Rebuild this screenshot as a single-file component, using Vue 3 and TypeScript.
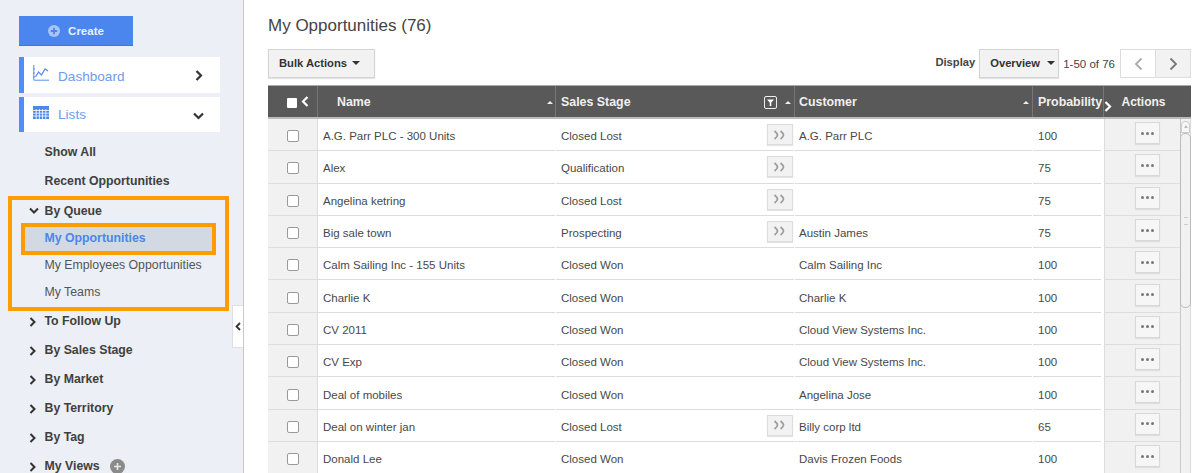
<script setup lang="ts">
interface Row { name: string; stage: string; customer: string; prob: string; arrow: boolean }
const rows: Row[] = [
  { name: 'A.G. Parr PLC - 300 Units', stage: 'Closed Lost', customer: 'A.G. Parr PLC', prob: '100', arrow: true },
  { name: 'Alex', stage: 'Qualification', customer: '', prob: '75', arrow: true },
  { name: 'Angelina ketring', stage: 'Closed Lost', customer: '', prob: '75', arrow: true },
  { name: 'Big sale town', stage: 'Prospecting', customer: 'Austin James', prob: '75', arrow: true },
  { name: 'Calm Sailing Inc - 155 Units', stage: 'Closed Won', customer: 'Calm Sailing Inc', prob: '100', arrow: false },
  { name: 'Charlie K', stage: 'Closed Won', customer: 'Charlie K', prob: '100', arrow: false },
  { name: 'CV 2011', stage: 'Closed Won', customer: 'Cloud View Systems Inc.', prob: '100', arrow: false },
  { name: 'CV Exp', stage: 'Closed Won', customer: 'Cloud View Systems Inc.', prob: '100', arrow: false },
  { name: 'Deal of mobiles', stage: 'Closed Won', customer: 'Angelina Jose', prob: '100', arrow: false },
  { name: 'Deal on winter jan', stage: 'Closed Lost', customer: 'Billy corp ltd', prob: '65', arrow: true },
  { name: 'Donald Lee', stage: 'Closed Won', customer: 'Davis Frozen Foods', prob: '100', arrow: false },
]
const closedGroups = ['To Follow Up', 'By Sales Stage', 'By Market', 'By Territory', 'By Tag']
</script>

<template>
  <div class="page">
    <aside class="sidebar">
      <button class="create">
        <svg width="12" height="12" viewBox="0 0 12 12"><circle cx="6" cy="6" r="6" fill="#a9c4f5" /><path d="M6 2.8v6.4M2.8 6h6.4" stroke="#4a86ee" stroke-width="1.8" /></svg>
        <span>Create</span>
      </button>
      <div class="nav-card first">
        <svg class="nav-ico" width="16" height="16" viewBox="0 0 16 16" fill="none" stroke="#5b8def" stroke-width="1"><path d="M.8 0v15.2H16" /><path d="M2.5 12l3-5 3 3 3.5-6 3 2" stroke-width="1.3" /><path d="M0 4h2M0 8h2M0 12h2" /></svg>
        <span class="nav-label">Dashboard</span>
        <svg class="chev-r" width="8" height="11" viewBox="0 0 8 11"><path d="M1.5 1l4.5 4.5L1.5 10" fill="none" stroke="#333" stroke-width="2.2" /></svg>
      </div>
      <div class="nav-card second">
        <svg class="nav-ico" width="16" height="13" viewBox="0 0 16 13"><rect width="16" height="13" fill="#4f86ec" /><path d="M0 4.5h16M0 7.2h16M0 10h16M3.2 3v10M6.4 3v10M9.6 3v10M12.8 3v10" stroke="#fff" stroke-width=".8" /></svg>
        <span class="nav-label">Lists</span>
        <svg class="chev-d" width="11" height="8" viewBox="0 0 11 8"><path d="M1 1.5l4.500 4.500L10 1.500" fill="none" stroke="#333" stroke-width="2.2" /></svg>
      </div>
      <div class="item bold show-all">Show All</div>
      <div class="item bold recent">Recent Opportunities</div>
      <div class="queue-box">
        <div class="item bold group">
          <svg class="g-ico" width="10" height="8" viewBox="0 0 10 8"><path d="M1 1.500l4 4 4-4" fill="none" stroke="#333" stroke-width="2" /></svg>
          By Queue
        </div>
        <div class="active-box"><span>My Opportunities</span></div>
        <div class="item sub">My Employees Opportunities</div>
        <div class="item sub">My Teams</div>
      </div>
      <div class="closed-list">
        <div v-for="g in closedGroups" :key="g" class="item bold group">
          <svg class="g-ico" width="8" height="10" viewBox="0 0 8 10"><path d="M1.500 1l4 4-4 4" fill="none" stroke="#333" stroke-width="2" /></svg>
          {{ g }}
        </div>
        <div class="item bold group">
          <svg class="g-ico" width="8" height="10" viewBox="0 0 8 10"><path d="M1.500 1l4 4-4 4" fill="none" stroke="#333" stroke-width="2" /></svg>
          My Views
          <svg class="plus" width="15" height="15" viewBox="0 0 15 15"><circle cx="7.500" cy="7.500" r="7.500" fill="#8a8a8a" /><path d="M7.500 4v7M4 7.500h7" stroke="#e8e8e8" stroke-width="1.600" /></svg>
        </div>
      </div>
      <div class="collapse">
        <svg width="6" height="9" viewBox="0 0 6 9"><path d="M5 1L1.500 4.500 5 8" fill="none" stroke="#333" stroke-width="1.800" /></svg>
      </div>
    </aside>

    <main class="main">
      <h1 class="title">My Opportunities (76)</h1>
      <div class="toolbar">
        <button class="btn bulk">Bulk Actions <i class="caret"></i></button>
        <div class="tools-right">
          <span class="display">Display</span>
          <button class="btn overview">Overview <i class="caret"></i></button>
          <span class="count">1-50 of 76</span>
          <div class="pager">
            <span class="pg white"><svg width="9" height="14" viewBox="0 0 9 14"><path d="M7.500 1.500L2 7l5.500 5.500" fill="none" stroke="#aaa" stroke-width="1.800" /></svg></span>
            <span class="pg"><svg width="9" height="14" viewBox="0 0 9 14"><path d="M1.500 1.500L7 7l-5.500 5.500" fill="none" stroke="#777" stroke-width="1.800" /></svg></span>
          </div>
        </div>
      </div>

      <div class="table">
        <div class="head grid">
          <div class="hc hc-check"><i class="hbox"></i><svg width="8" height="11" viewBox="0 0 8 11"><path d="M6.500 1L2 5.500l4.500 4.500" fill="none" stroke="#fff" stroke-width="2.200" /></svg></div>
          <div class="hc name-h">Name<i class="up"></i></div>
          <div class="hc">Sales Stage
            <svg class="filter" width="13" height="13" viewBox="0 0 13 13"><rect x=".5" y=".5" width="12" height="12" rx="1.500" fill="none" stroke="#eee" /><path d="M3 3.500h7L7.300 6.500V10H5.700V6.500z" fill="#fff" /></svg>
            <i class="up"></i></div>
          <div class="hc cust-h">Customer<i class="up"></i></div>
          <div class="hc">Probability<svg class="prob-chev" width="8" height="11" viewBox="0 0 8 11"><path d="M1.500 1L6 5.500 1.500 10" fill="none" stroke="#fff" stroke-width="2.200" /></svg></div>
          <div class="hc act-h">Actions</div>
        </div>
        <div class="body">
          <div v-for="r in rows" :key="r.name" class="grid row">
            <div class="c c-check"><i class="cbox"></i></div>
            <div class="c">{{ r.name }}</div>
            <div class="c stage">{{ r.stage }}
              <span v-if="r.arrow" class="more">
                <svg width="14" height="10" viewBox="0 0 14 10"><path d="M1.500 1C4 3 4.500 4 4.500 5S4 7 1.500 9M7.500 1C10 3 10.500 4 10.500 5S10 7 7.500 9" fill="none" stroke="#a0a0a0" stroke-width="1.800" /></svg>
              </span>
            </div>
            <div class="c cust">{{ r.customer }}</div>
            <div class="c prob">{{ r.prob }}</div>
            <div class="c c-act"><span class="dots"><i></i><i></i><i></i></span></div>
          </div>
          <div class="scroll">
            <span class="sc-up"><i></i></span>
            <span class="sc-thumb"><i></i></span>
          </div>
        </div>
      </div>
    </main>
  </div>
</template>

<style>
html, body { margin: 0; background: #fff; overflow: hidden; }
</style>

<style scoped>
.page { display: flex; width: 1200px; height: 473px; overflow: hidden; font-family: "Liberation Sans", Arial, sans-serif; }
.sidebar { position: relative; box-sizing: border-box; width: 244px; height: 473px; flex: none; background: #eceff5; border-right: 1px solid #c6c8cc; padding: 16px 0 0 19px; }
.create { display: flex; align-items: center; justify-content: center; gap: 8px; width: 114px; height: 30px; margin: 0; padding: 0; border: 0; border-bottom: 1px solid #3a78e0; background: #4a86ee; color: #e8f0fe; font: bold 11.500px "Liberation Sans", sans-serif; }
.nav-card { display: flex; align-items: center; box-sizing: border-box; width: 201px; background: #fff; border-left: 5px solid #4f8ef7; }
.first { height: 36px; margin-top: 11px; }
.second { height: 35px; margin-top: 4px; }
.nav-ico { margin-left: 9px; margin-top: -5px; flex: none; }
.nav-label { margin-left: 9px; font-size: 13.600px; color: #6d9bef; }
.first .nav-label { margin-top: 2px; }
.chev-r { margin-left: auto; margin-right: 17px; }
.chev-d { margin-left: auto; margin-right: 16px; margin-top: 3px; }
.item { position: relative; font-size: 12.300px; line-height: 29px; height: 29px; padding-left: 25.500px; white-space: nowrap; }
.bold { font-weight: bold; color: #404040; }
.show-all { margin-top: 6px; }
.recent { margin-bottom: -.5px; }
.queue-box { box-sizing: border-box; width: 221px; height: 115px; margin: 0 0 0 -11px; border: 4px solid #ff9c00; }
.queue-box .item { padding-left: 32.500px; }
.queue-box .group { line-height: 23px; height: 23px; }
.queue-box .sub { height: 27.500px; line-height: 27.500px; color: #555; font-weight: normal; }
.active-box { box-sizing: border-box; width: 195px; height: 32px; margin: 0 0 -3px 9px; background: #d3d9e2; border: 4px solid #ff9c00; display: flex; align-items: center; padding: 0 0 2px 19.500px; font: bold 12.300px "Liberation Sans", sans-serif; color: #4a86ee; }
.g-ico { position: absolute; left: 9.500px; top: 50%; transform: translateY(-50%); }
.queue-box .g-ico { left: 16.500px; }
.closed-list { margin-top: -3.500px; }
.plus { position: absolute; left: 91px; top: 7px; }
.collapse { position: absolute; left: 232px; top: 305px; box-sizing: border-box; width: 11px; height: 43px; background: #fff; border: 1px solid #dcdfe4; border-right: 0; display: flex; align-items: center; justify-content: center; }

.main { flex: 1; min-width: 0; padding: 0 9px 0 24px; }
.title { margin: 14px 0 0; font-size: 17px; line-height: 24px; font-weight: normal; color: #444; }
.toolbar { display: flex; align-items: center; justify-content: space-between; margin-top: 11px; height: 29px; }
.btn { box-sizing: border-box; display: inline-flex; align-items: center; height: 29px; padding: 0 0 2px; border: 1px solid #d4d4d4; background: #f2f2f2; color: #333; font: bold 11.200px "Liberation Sans", sans-serif; box-shadow: 0 1px 1px #e4e4e4; }
.bulk { width: 107px; padding-left: 10px; gap: 4px; }
.caret { display: inline-block; width: 0; height: 0; border-left: 4px solid transparent; border-right: 4px solid transparent; border-top: 4px solid #333; margin-left: 1px; }
.tools-right { display: flex; align-items: center; }
.display { font-size: 11.200px; font-weight: bold; color: #444; margin-right: 4px; margin-top: -3px; }
.overview { width: 80px; padding-left: 10px; gap: 6px; }
.count { font-size: 11.500px; color: #444; margin-left: 4px; margin-right: 5px; }
.pager { display: flex; height: 29px; box-sizing: border-box; border: 1px solid #ddd; }
.pg { width: 34px; display: flex; align-items: center; justify-content: center; background: #f2f2f2; }
.pg.white { background: #fff; border-right: 1px solid #ddd; }

.table { margin-top: 7px; width: 923px; }
.grid { display: grid; grid-template-columns: 50px 238px 239px 238px 71px 87px; }
.head { height: 34px; background: #595959; border-top: 1px solid #aaa; border-bottom: 2px solid #bbb; box-sizing: border-box; }
.hc { position: relative; display: flex; align-items: center; padding-left: 5px; font-size: 12.400px; font-weight: bold; color: #f0f0f0; border-right: 1px solid #777; white-space: nowrap; }
.hc:last-child { border-right: 0; }
.hc-check { padding-left: 19px; gap: 4px; }
.hbox { width: 10px; height: 10px; background: #fff; border-radius: 1px; margin-top: 2px; }
.name-h { padding-left: 19px; }
.name-h .up { right: 2px; }
.cust-h { padding-left: 4px; }
.up { position: absolute; right: 3px; top: 15px; width: 0; height: 0; border-left: 3px solid transparent; border-right: 3px solid transparent; border-bottom: 3px solid #eee; }
.filter { position: absolute; right: 17px; top: 10px; }
.prob-chev { position: absolute; right: -9px; top: 15px; z-index: 2; }
.act-h { justify-content: center; padding: 0 8px 0 0; font-size: 12px; }
.body { position: relative; height: 354px; overflow: hidden; }
.row { height: 32.300px; }
.c { position: relative; box-sizing: border-box; display: flex; align-items: center; padding: 3px 5px 0; font-size: 11.500px; color: #484848; white-space: nowrap; border-bottom: 1px solid #dcdcdc; margin-right: 1px; }
.cust { padding-left: 4px; }
.prob { margin-right: 3px; }
.c-check { background: #f1f1f1; justify-content: center; padding: 0; margin: 0; border-right: 1px solid #ddd; }
.c-act { background: #f1f1f1; margin: 0; justify-content: center; padding: 0 1px 3px 0; border-left: 1px solid #ddd; border-bottom-color: #ddd; }
.cbox { box-sizing: border-box; width: 12px; height: 12px; background: #fff; border: 1px solid #999; border-radius: 2px; margin-top: 3px; margin-left: 1px; }
.more { position: absolute; right: 1px; top: 5px; width: 26px; height: 21px; box-sizing: border-box; border: 1px solid #ddd; background: #f2f2f2; display: flex; align-items: center; justify-content: center; box-shadow: 0 1px 1px #e4e4e4; }
.dots { box-sizing: border-box; display: flex; align-items: center; justify-content: center; gap: 2px; width: 25px; height: 22px; border: 1px solid #d8d8d8; background: #f6f6f6; box-shadow: 0 1px 1px #dedede; }
.dots i { width: 3px; height: 3px; border-radius: 50%; background: #777; }
.scroll { position: absolute; right: 0; top: 0; bottom: 0; width: 11px; box-sizing: border-box; border-left: 1px solid #c8c8c8; border-right: 1px solid #dcdcdc; background: #f1f1f1; }
.sc-up { position: absolute; top: 2px; left: 0; width: 9px; height: 12px; box-sizing: border-box; border: 1px solid #ccc; border-radius: 4px 4px 0 0; background: #f7f7f7; display: flex; justify-content: center; padding-top: 3px; }
.sc-up i { width: 0; height: 0; border-left: 2.500px solid transparent; border-right: 2.500px solid transparent; border-bottom: 3px solid #bbb; }
.sc-thumb { position: absolute; top: 14px; left: -1px; width: 11px; height: 175px; box-sizing: border-box; border: 1px solid #bbb; border-radius: 5px; background: #f1f1f1; display: flex; align-items: center; justify-content: center; }
.sc-thumb i { width: 4px; height: 6px; border-top: 1px solid #ccc; border-bottom: 1px solid #ccc; }
</style>
